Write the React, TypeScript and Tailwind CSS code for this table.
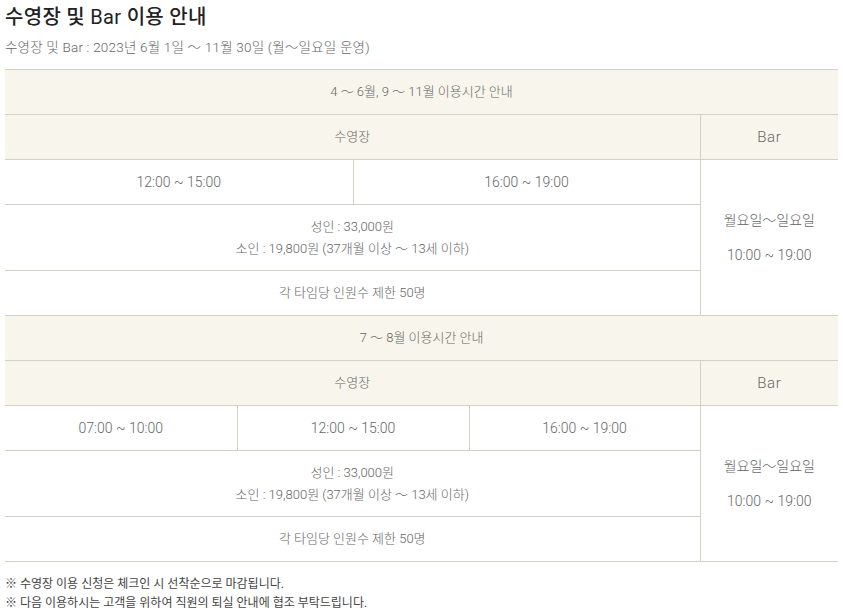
import React from "react";

const cell = "border border-[#d6cfc4] text-center align-middle";
const head = "bg-[#f8f6ec]";

function Season({
  title,
  times,
}: {
  title: string;
  times: string[];
}) {
  return (
    <>
      <tr className="h-[45px]">
        <td colSpan={7} className={`${cell} ${head} border-l-0 border-r-0`}>
          {title}
        </td>
      </tr>
      <tr className="h-[45px]">
        <td colSpan={6} className={`${cell} ${head} border-l-0`}>
          수영장
        </td>
        <td className={`${cell} ${head} border-r-0 w-[138px] text-[15px] tracking-[0.6px]`}>Bar</td>
      </tr>
      <tr className="h-[45px]">
        {times.map((t, i) => (
          <td
            key={t}
            colSpan={6 / times.length}
            className={`${cell} text-[14px] ${i === 0 ? "border-l-0" : ""}`}
          >
            {t}
          </td>
        ))}
        <td rowSpan={3} className={`${cell} border-r-0`}>
          <div className="text-[14px]">월요일～일요일</div>
          <div className="mt-[14px] text-[14px]">10:00 ~ 19:00</div>
        </td>
      </tr>
      <tr className="h-[66px]">
        <td colSpan={6} className={`${cell} border-l-0 leading-[22px]`}>
          <div>성인 : 33,000원</div>
          <div>소인 : 19,800원 (37개월 이상 ～ 13세 이하)</div>
        </td>
      </tr>
      <tr className="h-[45px]">
        <td colSpan={6} className={`${cell} border-l-0`}>
          각 타임당 인원수 제한 50명
        </td>
      </tr>
    </>
  );
}

export default function App() {
  return (
    <div
      className="w-[843px] px-[5px] pt-[4px] text-[#666] font-light"
      style={{ fontFamily: "Roboto, 'Noto Sans CJK KR', sans-serif" }}
    >
      <h1 className="text-[20px] font-medium text-[#222] leading-[26px] tracking-[0.3px]">
        수영장 및 <span className="font-normal">Bar</span> 이용 안내
      </h1>
      <p className="mt-[8px] text-[13.5px] leading-[18px] tracking-[0.2px]">
        수영장 및 Bar : 2023년 6월 1일 ～ 11월 30일 (월～일요일 운영)
      </p>
      <table className="mt-[13px] w-[833px] border-collapse table-fixed text-[13px]">
        <colgroup>
          <col className="w-[116px]" />
          <col className="w-[116px]" />
          <col className="w-[116px]" />
          <col className="w-[116px]" />
          <col className="w-[116px]" />
          <col className="w-[115px]" />
          <col className="w-[138px]" />
        </colgroup>
        <tbody>
          <Season title="4 ～ 6월, 9 ～ 11월 이용시간 안내" times={["12:00 ~ 15:00", "16:00 ~ 19:00"]} />
          <Season
            title="7 ～ 8월 이용시간 안내"
            times={["07:00 ~ 10:00", "12:00 ~ 15:00", "16:00 ~ 19:00"]}
          />
        </tbody>
      </table>
      <div className="mt-[13px] text-[12px] leading-[19px] text-[#444] font-normal">
        <p>※ 수영장 이용 신청은 체크인 시 선착순으로 마감됩니다.</p>
        <p>※ 다음 이용하시는 고객을 위하여 직원의 퇴실 안내에 협조 부탁드립니다.</p>
      </div>
    </div>
  );
}
